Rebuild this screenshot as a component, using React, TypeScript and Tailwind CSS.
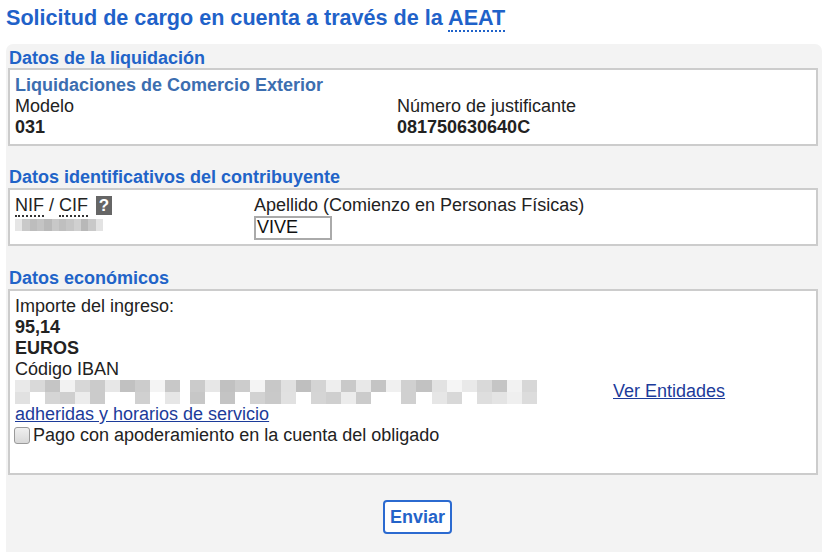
import React from "react";

const blurNif = ["#e6e6e6", "#c9c9c9", "#bdbdbd", "#c4c4c4", "#b9b9b9", "#c8c8c8", "#bfbfbf", "#c6c6c6", "#d0d0d0", "#b8b8b8", "#c9c9c9", "#e3e3e3"];

function Blur({ cols, w, h }: { cols: string[]; w: number; h: number }) {
  return (
    <div className="flex" style={{ width: w, height: h }}>
      {cols.map((c, i) => (
        <div key={i} className="flex-1" style={{ background: c }} />
      ))}
    </div>
  );
}

function IbanBlur({ seed, w }: { seed: number; w: number }) {
  const top = ["#e9e9e9", "#d9d9d9", "#c5c5c5", "#f2f2f2", "#d7d7d7", "#cbcbcb", "#e7e7e7", "#c1c1c1", "#cccccc", "#f4f4f4", "#c8c8c8", "#e0e0e0", "#bfbfbf", "#d4d4d4", "#eeeeee", "#c9c9c9", "#e8e8e8", "#c4c4c4", "#f0f0f0", "#d0d0d0", "#c2c2c2", "#e2e2e2", "#f5f5f5"];
  const bot = ["#e1e1e1", "#d0d0d0", "#dcdcdc", "#ffffff", "#ffffff", "#c7c7c7", "#d5d5d5", "#e6e6e6", "#ffffff", "#cfcfcf", "#d8d8d8", "#c4c4c4", "#ececec", "#ffffff", "#ffffff", "#cbcbcb", "#dedede", "#d2d2d2", "#ffffff", "#e4e4e4", "#c9c9c9", "#ffffff", "#efefef"];
  const n = Math.round(w / 15);
  const a = Array.from({ length: n }, (_, i) => top[(i + seed) % top.length]);
  const b = Array.from({ length: n }, (_, i) => bot[(i * 3 + seed) % bot.length]);
  return (
    <div className="flex flex-col" style={{ width: w, height: 24 }}>
      <div className="flex h-[12px]">
        {a.map((c, i) => (
          <div key={i} className="flex-1" style={{ background: c }} />
        ))}
      </div>
      <div className="flex h-[12px]">
        {b.map((c, i) => (
          <div key={i} className="flex-1" style={{ background: c }} />
        ))}
      </div>
    </div>
  );
}

export default function App() {
  return (
    <div className="bg-white w-[828px] h-[552px] overflow-hidden text-[18px] text-[#222] font-['Liberation_Sans',Arial,sans-serif] leading-[21px]">
      <h1 className="pl-[6px] pt-[4px] h-[44px] text-[21.6px] leading-[27px] font-bold text-[#1f62c9]">
        Solicitud de cargo en cuenta a través de la{" "}
        <abbr className="no-underline border-b-2 border-dotted border-[#1f62c9]">AEAT</abbr>
      </h1>
      <div className="ml-[6px] w-[816px] h-[520px] bg-[#f3f3f3] rounded-t-[7px] pt-[4px] px-[2px]">
        <h2 className="pl-[1px] font-bold text-[#2163c8] h-[20px] leading-[21px]">Datos de la liquidación</h2>
        <div className="bg-white border-2 border-[#cccccc] px-[5px] pt-[5px] pb-[6px] w-[810px]">
          <div className="font-bold text-[#3c6eb0]">Liquidaciones de Comercio Exterior</div>
          <div className="flex">
            <div className="w-[382px]">
              <div>Modelo</div>
              <div className="font-bold">031</div>
            </div>
            <div>
              <div>Número de justificante</div>
              <div className="font-bold">081750630640C</div>
            </div>
          </div>
        </div>

        <h2 className="mt-[21px] pl-[1px] font-bold text-[#2163c8] h-[20px]">Datos identificativos del contribuyente</h2>
        <div className="mt-[1px] bg-white border-2 border-[#cccccc] px-[5px] pt-[5px] h-[58px] w-[810px] flex">
          <div className="w-[239px]">
            <div className="flex items-center gap-[8px]">
              <span>
                <abbr className="no-underline border-b-2 border-dotted border-[#333]">NIF</abbr> /{" "}
                <abbr className="no-underline border-b-2 border-dotted border-[#333]">CIF</abbr>
              </span>
              <span className="inline-flex items-center justify-center w-[16px] h-[19px] bg-[#666] text-white font-bold text-[17px] leading-none">?</span>
            </div>
            <div className="mt-[3px]">
              <Blur cols={blurNif} w={88} h={12} />
            </div>
          </div>
          <div>
            <div>Apellido (Comienzo en Personas Físicas)</div>
            <div className="w-[78px] h-[24px] border-2 border-[#aaaaaa] leading-[19px] pl-[1px] text-[#111]">VIVE</div>
          </div>
        </div>

        <h2 className="mt-[22px] pl-[1px] font-bold text-[#2163c8] h-[20px]">Datos económicos</h2>
        <div className="mt-[1px] bg-white border-2 border-[#cccccc] px-[5px] pt-[5px] h-[186px] w-[810px]">
          <div>Importe del ingreso:</div>
          <div className="font-bold">95,14</div>
          <div className="font-bold">EUROS</div>
          <div>Código IBAN</div>
          <div className="flex items-start h-[24px]">
            <IbanBlur seed={0} w={165} />
            <div className="w-[10px]" />
            <IbanBlur seed={5} w={347} />
            <a href="#" className="ml-[76px] mt-[1px] underline text-[#1c3b9a] leading-[21px]">Ver Entidades</a>
          </div>
          <a href="#" className="block underline text-[#1c3b9a] leading-[21px]">adheridas y horarios de servicio</a>
          <label className="flex items-center">
            <span className="w-[16px] h-[17px] ml-[-1px] mr-[3px] rounded-[3px] border border-[#9a9a9a] bg-gradient-to-b from-[#f0f0f0] to-[#d8d8d8]" />
            <span>Pago con apoderamiento en la cuenta del obligado</span>
          </label>
        </div>

        <div className="flex justify-center mt-[25px] pl-[7px]">
          <button className="w-[69px] h-[34px] border-2 border-[#2b6ad0] rounded-[4px] bg-white text-[#2463c9] font-bold text-[18px]">Enviar</button>
        </div>
      </div>
    </div>
  );
}
